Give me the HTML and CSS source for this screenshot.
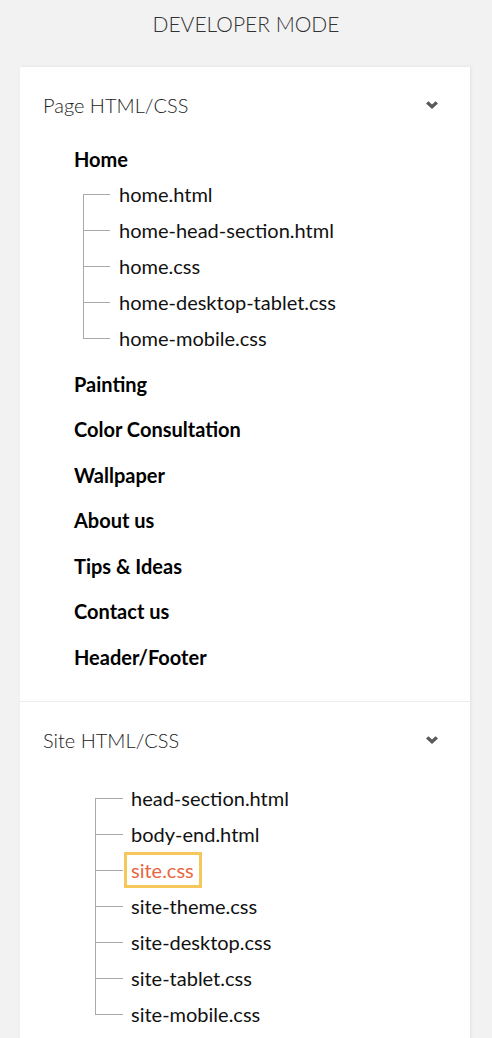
FILE: index.html
```html
<!DOCTYPE html>
<html lang="en">
<head>
<meta charset="utf-8">
<title>Developer Mode</title>
<link rel="stylesheet" href="styles.css">
</head>
<body>
<h1 class="title">DEVELOPER MODE</h1>
<div class="card">
  <section class="section">
    <div class="section-head">
      <span class="section-name">Page HTML/CSS</span>
      <svg class="chevron" width="12" height="8" viewBox="0 0 12 8"><path d="M0 2.6 L2.4 0.2 L6 3.6 L9.6 0.2 L12 2.6 L6 8 Z" fill="#5a5a5a"/></svg>
    </div>
    <div class="groups">
      <div class="group">
        <div class="group-title">Home</div>
        <ul class="tree tree-page">
          <li><span class="file">home.html</span></li>
          <li><span class="file">home-head-section.html</span></li>
          <li><span class="file">home.css</span></li>
          <li><span class="file">home-desktop-tablet.css</span></li>
          <li><span class="file">home-mobile.css</span></li>
        </ul>
      </div>
      <div class="group"><div class="group-title">Painting</div></div>
      <div class="group"><div class="group-title">Color Consultation</div></div>
      <div class="group"><div class="group-title">Wallpaper</div></div>
      <div class="group"><div class="group-title">About us</div></div>
      <div class="group"><div class="group-title">Tips &amp; Ideas</div></div>
      <div class="group"><div class="group-title">Contact us</div></div>
      <div class="group"><div class="group-title">Header/Footer</div></div>
    </div>
  </section>
  <section class="section">
    <div class="section-head">
      <span class="section-name">Site HTML/CSS</span>
      <svg class="chevron" width="12" height="8" viewBox="0 0 12 8"><path d="M0 2.6 L2.4 0.2 L6 3.6 L9.6 0.2 L12 2.6 L6 8 Z" fill="#5a5a5a"/></svg>
    </div>
    <ul class="tree tree-site">
      <li><span class="file">head-section.html</span></li>
      <li><span class="file">body-end.html</span></li>
      <li><span class="file file-active">site.css</span></li>
      <li><span class="file">site-theme.css</span></li>
      <li><span class="file">site-desktop.css</span></li>
      <li><span class="file">site-tablet.css</span></li>
      <li><span class="file">site-mobile.css</span></li>
    </ul>
  </section>
</div>
</body>
</html>
```
FILE: styles.css
```css
html, body {
  margin: 0;
  padding: 0;
}
body {
  background: #f2f2f2;
  font-family: Lato, "Open Sans", "Liberation Sans", sans-serif;
  color: #111;
}
.title {
  margin: 0;
  padding-top: 10px;
  height: 57px;
  line-height: 28px;
  text-align: center;
  font-size: 21px;
  font-weight: 300;
  color: #333;
}
.card {
  margin: 0 22px 0 20px;
  background: #fff;
  box-shadow: 1px 0 3px rgba(0, 0, 0, 0.08);
  min-height: 980px;
}
.section {
  padding: 24px 32px 21px 23px;
  border-bottom: 1px solid #ececec;
}
.section:last-child {
  border-bottom: none;
}
.section-head {
  display: flex;
  justify-content: space-between;
  align-items: center;
  height: 28px;
  line-height: 28px;
}
.section-name {
  font-size: 20px;
  font-weight: 300;
  color: #222;
}
.chevron {
  display: block;
  margin-top: -1px;
}
.groups {
  margin-top: 18px;
  padding-left: 31px;
}
.group-title {
  line-height: 45.5px;
  font-size: 20px;
  font-weight: 700;
  color: #000;
}
.tree {
  list-style: none;
  margin: 0;
  padding: 0;
}
.tree li {
  position: relative;
  height: 36px;
  display: flex;
  align-items: center;
  padding-left: 27px;
}
.tree li::before {
  content: "";
  position: absolute;
  left: 0;
  top: 50%;
  width: 27px;
  border-top: 1px solid #aaa;
}
.tree li::after {
  content: "";
  position: absolute;
  left: 0;
  top: 0;
  bottom: 0;
  border-left: 1px solid #aaa;
}
.tree li:first-child::after {
  top: 50%;
}
.tree li:last-child::after {
  bottom: 50%;
}
.tree-page {
  margin: -7px 0 6px 9px;
}
.tree-site {
  margin: 26px 0 0 52px;
}
.tree-site li {
  padding-left: 28px;
}
.tree-site li::before {
  width: 28px;
}
.file {
  display: inline-block;
  line-height: 30px;
  border: 3px solid transparent;
  padding: 0 6px;
  font-size: 20px;
  color: #111;
}
.tree-site .file {
  padding: 0 5px;
}
.file-active {
  border-color: #f6c85b;
  color: #e9663f;
  margin-left: 1px;
  padding: 0 5px 0 4px;
}
.tree-site .file-active {
  padding: 0 5px 0 4px;
}
```
